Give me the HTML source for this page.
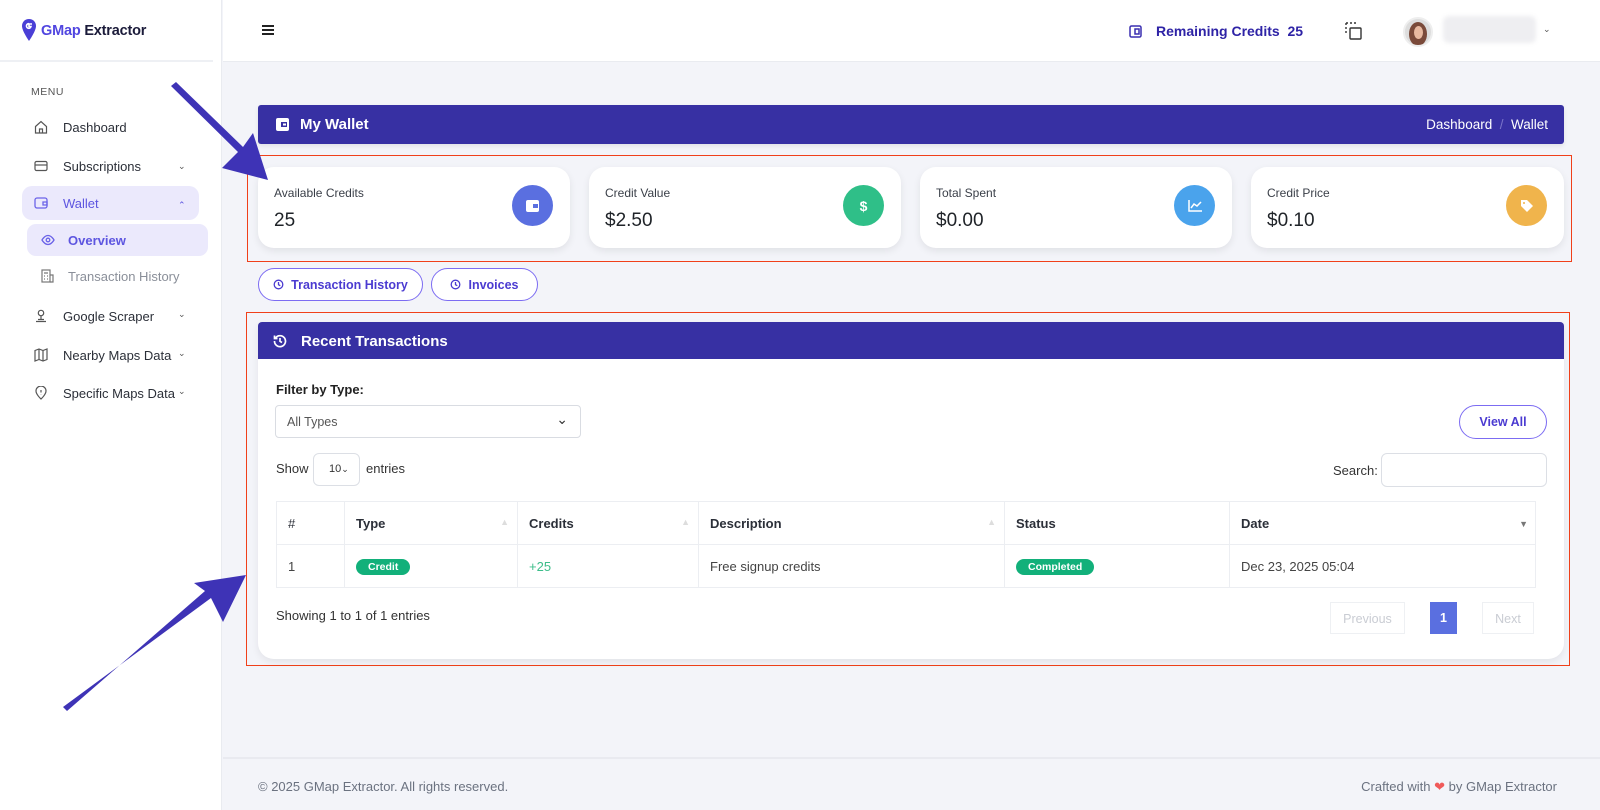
<!DOCTYPE html>
<html><head><meta charset="utf-8">
<style>
*{box-sizing:border-box;margin:0;padding:0}
body{width:1600px;height:810px;overflow:hidden;background:#f3f4f9;font-family:"Liberation Sans",sans-serif;color:#212529;position:relative;font-size:13px}
.a{position:absolute}
.side{left:0;top:0;width:222px;height:810px;background:#fff;border-right:1px solid #e9ebf0}
.nav{position:absolute;left:38px;font-size:13px;color:#2b2f38;display:flex;align-items:center}
.nav svg{position:absolute;left:-4px}
.nav span{position:absolute;left:25px;white-space:nowrap}
.chev{position:absolute;left:178px;font-size:9px;color:#555}
.card{background:#fff;border-radius:16px;box-shadow:0 3px 8px rgba(0,0,0,.08);width:312px;height:81px;top:167px}
.card .l{position:absolute;left:16px;top:19px;font-size:12px;color:#3a3f48}
.card .v{position:absolute;left:16px;top:43px;font-size:19px;color:#1f2328}
.card .ic{position:absolute;right:17px;top:18px;width:41px;height:41px;border-radius:50%;display:flex;align-items:center;justify-content:center}
.btn{top:268px;height:33px;border:1px solid #7c6cf2;border-radius:17px;background:#fff;color:#4b3bd1;font-size:12.5px;font-weight:bold;display:flex;align-items:center;justify-content:center;gap:7px}
th,td{text-align:left}
.badge{display:inline-block;background:#12b07a;color:#fff;font-size:10.5px;font-weight:bold;border-radius:9px;padding:2px 12px}
</style></head><body>

<div class="a side">
  <div class="a" style="left:0;top:60px;width:213px;height:2px;background:#eef0f4"></div>
  <svg class="a" style="left:22px;top:19px" width="14" height="22" viewBox="0 0 14 22"><path d="M7 0C3 0 0 3 0 7c0 5 7 15 7 15s7-10 7-15C14 3 11 0 7 0z" fill="#4a3fd6"/><path d="M10 5H7v2.5h2A2.3 2.3 0 1 1 7 4.7" stroke="#fff" stroke-width="1.6" fill="none"/></svg>
  <div class="a" style="left:41px;top:23px;font-size:14.5px;font-weight:bold;letter-spacing:-.2px"><span style="color:#5146e0">GMap</span> <span style="color:#1b1b3a">Extractor</span></div>
  <div class="a" style="left:31px;top:86px;font-size:10.5px;color:#555;letter-spacing:.5px">MENU</div>

  <div class="nav" style="top:127px"><svg width="14" height="14" viewBox="0 0 14 14" fill="none" stroke="#555" stroke-width="1.2"><path d="M1.5 6.5 7 1.5l5.5 5V13h-11z"/><path d="M5.5 13V9h3v4"/></svg><span>Dashboard</span></div>
  <div class="nav" style="top:166px"><svg width="14" height="14" viewBox="0 0 14 14" fill="none" stroke="#555" stroke-width="1.2"><rect x="1" y="2.5" width="12" height="9" rx="1.5"/><path d="M1 6h12"/></svg><span>Subscriptions</span></div>
  <div class="chev" style="top:161px">&#8964;</div>
  <div class="a" style="left:22px;top:186px;width:177px;height:34px;background:#ebe9fc;border-radius:10px"></div>
  <div class="nav" style="top:203px"><svg width="14" height="14" viewBox="0 0 14 14" fill="none" stroke="#6b63e8" stroke-width="1.3"><rect x="1" y="2" width="12" height="10" rx="2"/><path d="M9 6h4v3H9z"/></svg><span style="color:#5d55e0">Wallet</span></div>
  <div class="chev" style="top:200px;color:#5d55e0">&#8963;</div>
  <div class="a" style="left:27px;top:224px;width:181px;height:32px;background:#ebe9fc;border-radius:9px"></div>
  <div class="nav" style="top:240px;left:45px"><svg width="14" height="12" viewBox="0 0 14 12" fill="none" stroke="#6b63e8" stroke-width="1.3"><path d="M1 6s2.5-4.5 6-4.5S13 6 13 6s-2.5 4.5-6 4.5S1 6 1 6z"/><circle cx="7" cy="6" r="1.8"/></svg><span style="color:#5d55e0;font-weight:bold;left:23px">Overview</span></div>
  <div class="nav" style="top:276px;left:45px"><svg width="13" height="14" viewBox="0 0 13 14" fill="none" stroke="#777" stroke-width="1.2"><rect x="1" y="1" width="8" height="12"/><path d="M9 6h3v7H9M3 4h4M3 7h1M6 7h1M3 10h1M6 10h1"/></svg><span style="color:#8a8f99;left:23px">Transaction History</span></div>
  <div class="nav" style="top:316px"><svg width="14" height="14" viewBox="0 0 14 14" fill="none" stroke="#555" stroke-width="1.2"><circle cx="7" cy="4" r="2.7"/><path d="M7 7v4M2 12.5h10M4 10.5h6"/></svg><span>Google Scraper</span></div>
  <div class="chev" style="top:309px">&#8964;</div>
  <div class="nav" style="top:355px"><svg width="14" height="14" viewBox="0 0 14 14" fill="none" stroke="#555" stroke-width="1.2"><path d="M1 2.5l4-1.5 4 1.5 4-1.5v10.5l-4 1.5-4-1.5-4 1.5zM5 1v10.5M9 2.5V13"/></svg><span>Nearby Maps Data</span></div>
  <div class="chev" style="top:348px">&#8964;</div>
  <div class="nav" style="top:393px"><svg width="14" height="14" viewBox="0 0 14 14" fill="none" stroke="#555" stroke-width="1.2"><path d="M7 13s5-4.5 5-8A5 5 0 0 0 2 5c0 3.5 5 8 5 8z"/><path d="M7 4v2.5M7 8.2v.3"/></svg><span>Specific Maps Data</span></div>
  <div class="chev" style="top:386px">&#8964;</div>
</div>

<div class="a" style="left:223px;top:0;width:1377px;height:62px;background:#fff;border-bottom:1px solid #e9ebf0"></div>
<div class="a" style="left:262px;top:25px;width:12px;height:2px;background:#222;box-shadow:0 4px 0 #222,0 8px 0 #222"></div>
<svg class="a" style="left:1129px;top:25px" width="13" height="13" viewBox="0 0 13 13" fill="none" stroke="#3a2fb0" stroke-width="1.5"><rect x="1" y="1" width="11" height="11" rx="1.5"/><rect x="6" y="4" width="4" height="5"/></svg>
<div class="a" style="left:1156px;top:23px;font-size:14px;font-weight:bold;color:#2e23a6">Remaining Credits&nbsp; 25</div>
<svg class="a" style="left:1345px;top:22px" width="18" height="19" viewBox="0 0 18 19" fill="none" stroke="#333" stroke-width="1.4"><path d="M1 1h2M5 1h2M9 1h2M1 1v2M1 5v2M1 9v2" stroke-dasharray="2 2"/><rect x="5" y="6" width="11" height="11" rx="1"/></svg>
<div class="a" style="left:1403px;top:17px;width:30px;height:30px;border-radius:50%;background:#ddd;border:2px solid #eee;overflow:hidden"><div style="position:absolute;left:4px;top:3px;width:18px;height:24px;border-radius:50%;background:#7a4a3a"></div><div style="position:absolute;left:9px;top:7px;width:9px;height:13px;border-radius:50%;background:#e8b9a0"></div></div>
<div class="a" style="left:1443px;top:16px;width:93px;height:27px;background:#eeeef1;border-radius:6px;filter:blur(2px)"></div>
<div class="a" style="left:1543px;top:24px;font-size:9px;color:#555">&#8964;</div>

<div class="a" style="left:258px;top:105px;width:1306px;height:39px;background:#3730a3;border-radius:3px;box-shadow:0 2px 5px rgba(0,0,0,.08)"></div>
<svg class="a" style="left:276px;top:118px" width="13" height="13" viewBox="0 0 13 13"><rect width="13" height="13" rx="2" fill="#fff"/><rect x="5" y="4" width="6" height="5" fill="#3730a3"/><rect x="7" y="5.5" width="3" height="2" fill="#fff"/></svg>
<div class="a" style="left:300px;top:116px;font-size:15px;font-weight:bold;color:#fff">My Wallet</div>
<div class="a" style="left:1400px;top:117px;width:148px;text-align:right;font-size:13.5px;color:#fff">Dashboard <span style="color:#7a74c9">&nbsp;/&nbsp;</span> Wallet</div>

<div class="a" style="left:247px;top:155px;width:1325px;height:107px;border:1px solid #f0401a"></div>

<div class="a card" style="left:258px"><div class="l">Available Credits</div><div class="v">25</div><div class="ic" style="background:#5a6fe0"><svg width="13" height="12" viewBox="0 0 13 12"><rect width="13" height="12" rx="2" fill="#fff"/><rect x="7" y="4" width="5" height="4" fill="#5a6fe0"/></svg></div></div>
<div class="a card" style="left:589px"><div class="l">Credit Value</div><div class="v">$2.50</div><div class="ic" style="background:#2fbf88;color:#fff;font-weight:bold;font-size:14px">$</div></div>
<div class="a card" style="left:920px"><div class="l">Total Spent</div><div class="v">$0.00</div><div class="ic" style="background:#4aa3ec"><svg width="14" height="12" viewBox="0 0 14 12" fill="none" stroke="#fff" stroke-width="1.5"><path d="M1 0v11h13M3 8l3-4 3 2 4-4"/></svg></div></div>
<div class="a card" style="left:1251px;width:313px"><div class="l">Credit Price</div><div class="v">$0.10</div><div class="ic" style="background:#f0b44c"><svg width="14" height="14" viewBox="0 0 14 14"><path d="M1 1h6l6 6-6 6-6-6z" fill="#fff"/><circle cx="4" cy="4" r="1" fill="#f0b44c"/></svg></div></div>

<div class="a btn" style="left:258px;width:165px"><svg width="11" height="11" viewBox="0 0 11 11" fill="none" stroke="#4b3bd1" stroke-width="1.3"><circle cx="5.5" cy="5.5" r="4.3"/><path d="M5.5 3v2.7l1.8 1"/></svg>Transaction History</div>
<div class="a btn" style="left:431px;width:107px"><svg width="11" height="11" viewBox="0 0 11 11" fill="none" stroke="#4b3bd1" stroke-width="1.3"><circle cx="5.5" cy="5.5" r="4.3"/><path d="M5.5 3v2.7l1.8 1"/></svg>Invoices</div>

<div class="a" style="left:246px;top:312px;width:1324px;height:354px;border:1px solid #f0401a"></div>
<div class="a" style="left:258px;top:322px;width:1306px;height:337px;background:#fff;border-radius:4px 4px 16px 16px;box-shadow:0 3px 8px rgba(0,0,0,.07)"></div>
<div class="a" style="left:258px;top:322px;width:1306px;height:37px;background:#3730a3;border-radius:4px 4px 0 0"></div>
<svg class="a" style="left:273px;top:334px" width="14" height="14" viewBox="0 0 14 14" fill="none" stroke="#fff" stroke-width="1.7"><path d="M2.5 4A5.5 5.5 0 1 1 1.5 7"/><path d="M1.5 1.5V4.5h3"/><path d="M7 4v3.3l2 1.2"/></svg>
<div class="a" style="left:301px;top:333px;font-size:15px;font-weight:bold;color:#fff">Recent Transactions</div>

<div class="a" style="left:276px;top:382px;font-size:13px;font-weight:bold;color:#222">Filter by Type:</div>
<div class="a" style="left:275px;top:405px;width:306px;height:33px;border:1px solid #d9dce2;border-radius:4px;font-size:12.5px;color:#555;padding:9px 11px">All Types<span style="position:absolute;right:12px;top:5px;font-size:14px;color:#333">&#8964;</span></div>

<div class="a" style="left:276px;top:461px;font-size:13px;color:#333">Show</div>
<div class="a" style="left:313px;top:453px;width:47px;height:33px;border:1px solid #dcdfe5;border-radius:6px;font-size:11px;color:#333;padding:9px 0 0 15px">10<span style="font-size:9px">&#8964;</span></div>
<div class="a" style="left:366px;top:461px;font-size:13px;color:#333">entries</div>

<div class="a" style="left:1459px;top:405px;width:88px;height:34px;border:1px solid #7c6cf2;border-radius:17px;font-size:12.5px;font-weight:bold;color:#4b3bd1;text-align:center;line-height:32px">View All</div>
<div class="a" style="left:1333px;top:463px;font-size:13px;color:#333">Search:</div>
<div class="a" style="left:1381px;top:453px;width:166px;height:34px;border:1px solid #dcdfe5;border-radius:6px"></div>

<table class="a" style="left:276px;top:501px;width:1260px;border-collapse:collapse;font-size:13px">
<colgroup><col style="width:68px"><col style="width:173px"><col style="width:181px"><col style="width:306px"><col style="width:225px"><col></colgroup>
<tr style="height:43px;font-weight:bold;color:#2b2f38">
<th style="border:1px solid #eceef2;padding-left:11px;font-weight:normal">#</th>
<th style="border:1px solid #eceef2;padding-left:11px;position:relative">Type<span style="position:absolute;right:8px;top:15px;color:#ddd;font-size:9px">&#9650;</span></th>
<th style="border:1px solid #eceef2;padding-left:11px;position:relative">Credits<span style="position:absolute;right:8px;top:15px;color:#ddd;font-size:9px">&#9650;</span></th>
<th style="border:1px solid #eceef2;padding-left:11px;position:relative">Description<span style="position:absolute;right:8px;top:15px;color:#ddd;font-size:9px">&#9650;</span></th>
<th style="border:1px solid #eceef2;padding-left:11px">Status</th>
<th style="border:1px solid #eceef2;padding-left:11px;position:relative">Date<span style="position:absolute;right:7px;top:17px;color:#777;font-size:9px">&#9660;</span></th>
</tr>
<tr style="height:43px;color:#444">
<td style="border:1px solid #eceef2;padding-left:11px">1</td>
<td style="border:1px solid #eceef2;padding-left:11px"><span class="badge">Credit</span></td>
<td style="border:1px solid #eceef2;padding-left:11px;color:#3dbd8a">+25</td>
<td style="border:1px solid #eceef2;padding-left:11px">Free signup credits</td>
<td style="border:1px solid #eceef2;padding-left:11px"><span class="badge">Completed</span></td>
<td style="border:1px solid #eceef2;padding-left:11px">Dec 23, 2025 05:04</td>
</tr>
</table>

<div class="a" style="left:276px;top:608px;font-size:13px;color:#333">Showing 1 to 1 of 1 entries</div>
<div class="a" style="left:1330px;top:602px;width:75px;height:32px;border:1px solid #eef0f3;color:#c9ccd3;font-size:12.5px;text-align:center;line-height:32px">Previous</div>
<div class="a" style="left:1430px;top:602px;width:27px;height:32px;background:#5a6fe0;color:#fff;font-size:12.5px;text-align:center;line-height:32px;font-weight:bold">1</div>
<div class="a" style="left:1482px;top:602px;width:52px;height:32px;border:1px solid #eef0f3;color:#c9ccd3;font-size:12.5px;text-align:center;line-height:32px">Next</div>

<div class="a" style="left:223px;top:757px;width:1377px;height:2px;background:#e9eaf0"></div>
<div class="a" style="left:258px;top:779px;font-size:13px;color:#6b7280">© 2025 GMap Extractor. All rights reserved.</div>
<div class="a" style="left:1350px;top:779px;width:207px;text-align:right;font-size:13px;color:#6b7280">Crafted with <span style="color:#f05a5a">&#10084;</span> by GMap Extractor</div>

<svg class="a" style="left:0;top:0" width="1600" height="810">
<polygon fill="#3e33b6" points="171,86 238,152 222,168 268,180 253,133 243,147 176,82"/>
<polygon fill="#3e33b6" points="63,707 211,598 223,622 246,575 194,583 205,591 67,711"/>
</svg>
</body></html>
